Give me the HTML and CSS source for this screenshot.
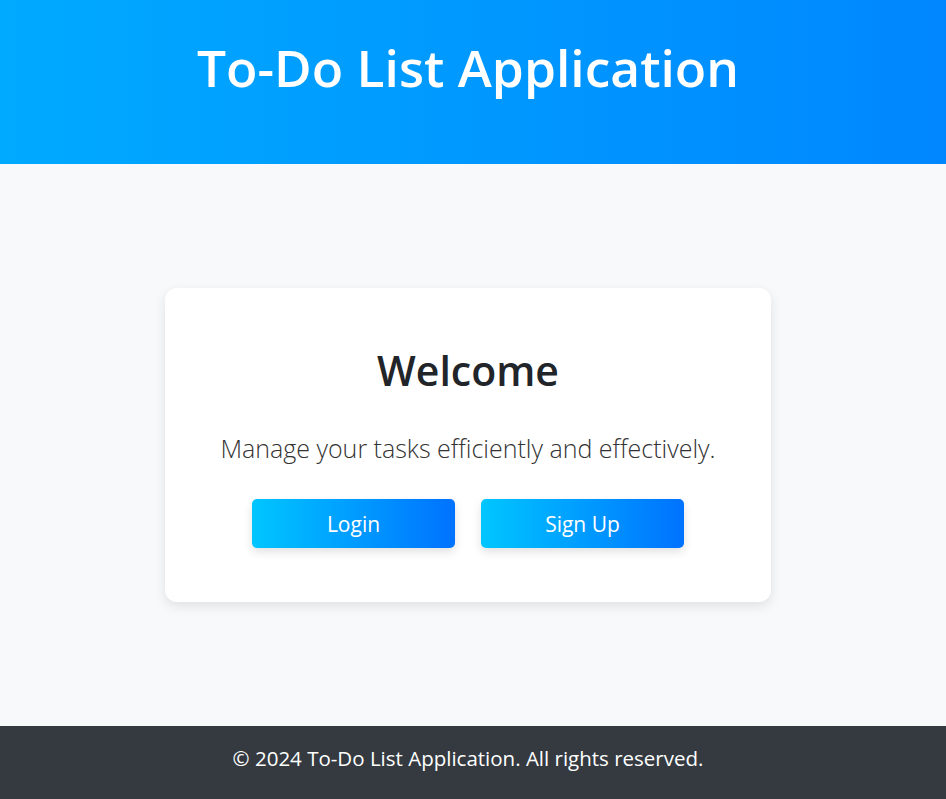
FILE: index.html
```html
<!DOCTYPE html>
<html lang="en">
<head>
<meta charset="utf-8">
<title>To-Do List Application</title>
<link rel="stylesheet" href="styles.css">
</head>
<body>
<header class="site-header">
  <h1 class="site-title">To-Do List Application</h1>
</header>
<main class="site-main">
  <section class="welcome-card">
    <h2 class="welcome-title">Welcome</h2>
    <p class="welcome-text">Manage your tasks efficiently and effectively.</p>
    <div class="actions">
      <a class="btn" href="#">Login</a>
      <a class="btn" href="#">Sign Up</a>
    </div>
  </section>
</main>
<footer class="site-footer">
  <p class="footer-text">&copy; 2024 To-Do List Application. All rights reserved.</p>
</footer>
</body>
</html>
```

FILE: styles.css
```css
* { box-sizing: border-box; }
html, body { margin: 0; padding: 0; }
body {
  font-family: "Open Sans", "Noto Sans", sans-serif;
  background: #f8f9fa;
  color: #212529;
  min-height: 100vh;
  display: flex;
  flex-direction: column;
}
.site-header {
  background: linear-gradient(90deg, #00aaff, #0087ff);
  height: 164px;
  padding: 34px 10px 0 0;
  text-align: center;
}
.site-title {
  margin: 0;
  color: #fff;
  font-size: 51.5px;
  font-weight: 600;
  line-height: 67px;
}
.site-main {
  flex: 1;
  display: flex;
  align-items: center;
  justify-content: center;
  padding-right: 10px;
}
.welcome-card {
  width: 606px;
  height: 314px;
  background: #fff;
  border-radius: 12px;
  box-shadow: 0 4px 12px rgba(0, 0, 0, 0.1);
  padding: 52px 40px 0;
  text-align: center;
}
.welcome-title {
  margin: 0;
  font-size: 41px;
  font-weight: 600;
  line-height: 60px;
  color: #212529;
}
.welcome-text {
  margin: 28px 0 0;
  font-size: 25px;
  font-weight: 300;
  color: #333;
  line-height: 40px;
}
.actions {
  display: flex;
  justify-content: center;
  gap: 26px;
  margin-top: 31px;
}
.btn {
  display: flex;
  align-items: center;
  justify-content: center;
  width: 203px;
  height: 49px;
  border-radius: 5px;
  background: linear-gradient(90deg, #00c6ff, #0072ff);
  color: #fff;
  text-decoration: none;
  font-size: 21px;
  box-shadow: 0 4px 10px rgba(0, 0, 0, 0.12);
}
.site-footer {
  background: #343a40;
  height: 73px;
  display: flex;
  align-items: center;
  justify-content: center;
  padding: 0 10px 10px 0;
}
.footer-text {
  margin: 0;
  color: #fff;
  font-size: 20.5px;
}
```
